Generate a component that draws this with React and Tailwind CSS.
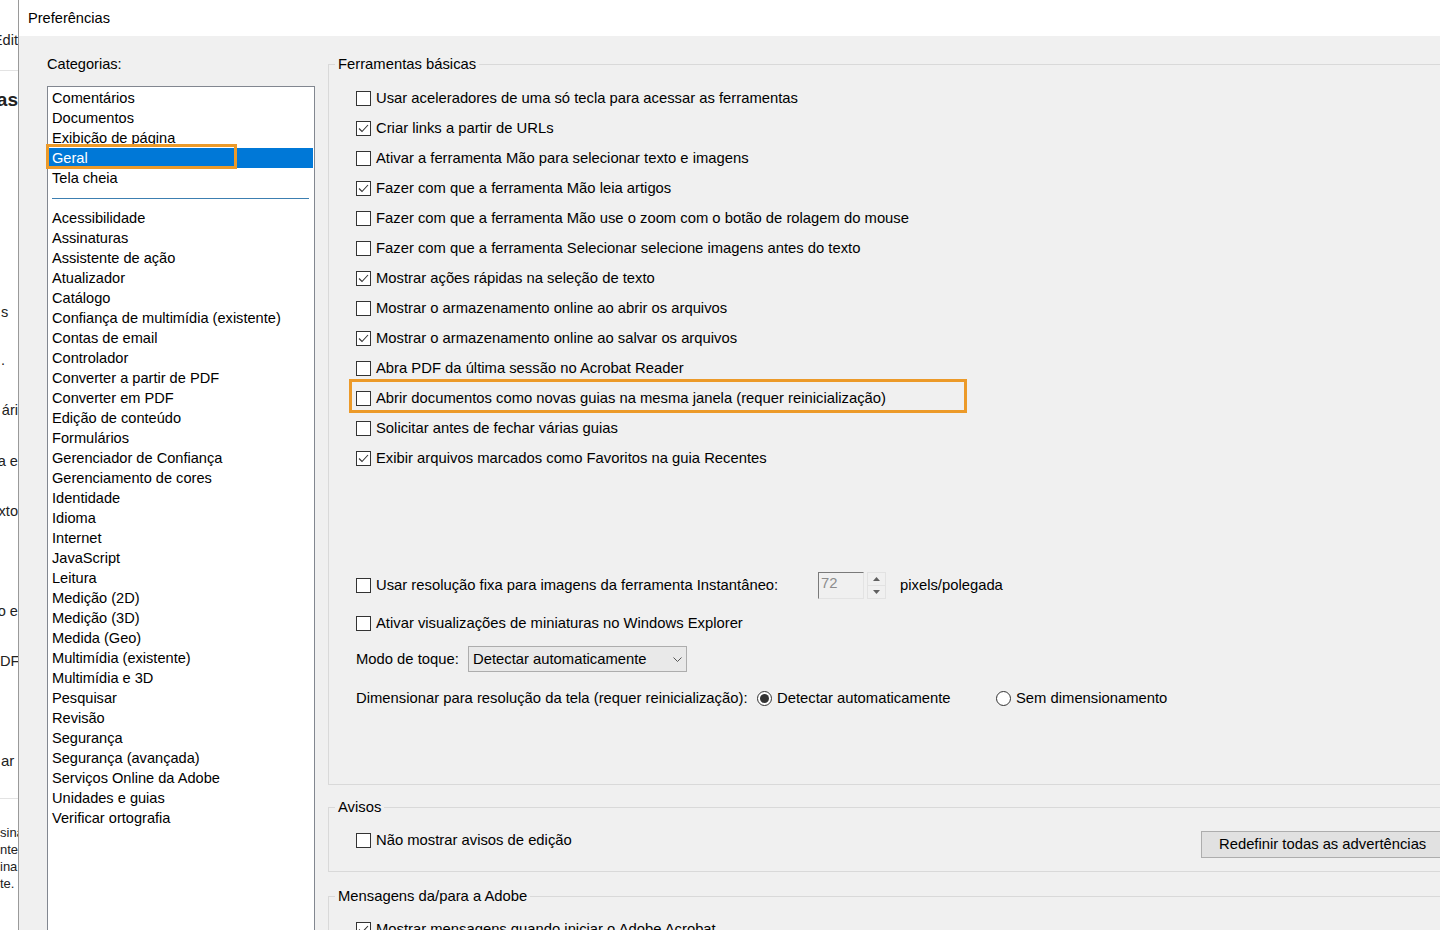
import React from "react";

const categoriasTopo = ["Comentários", "Documentos", "Exibição de página", "Geral", "Tela cheia"];

const categorias = [
  "Acessibilidade",
  "Assinaturas",
  "Assistente de ação",
  "Atualizador",
  "Catálogo",
  "Confiança de multimídia (existente)",
  "Contas de email",
  "Controlador",
  "Converter a partir de PDF",
  "Converter em PDF",
  "Edição de conteúdo",
  "Formulários",
  "Gerenciador de Confiança",
  "Gerenciamento de cores",
  "Identidade",
  "Idioma",
  "Internet",
  "JavaScript",
  "Leitura",
  "Medição (2D)",
  "Medição (3D)",
  "Medida (Geo)",
  "Multimídia (existente)",
  "Multimídia e 3D",
  "Pesquisar",
  "Revisão",
  "Segurança",
  "Segurança (avançada)",
  "Serviços Online da Adobe",
  "Unidades e guias",
  "Verificar ortografia",
];

const ferramentas = [
  { text: "Usar aceleradores de uma só tecla para acessar as ferramentas", checked: false },
  { text: "Criar links a partir de URLs", checked: true },
  { text: "Ativar a ferramenta Mão para selecionar texto e imagens", checked: false },
  { text: "Fazer com que a ferramenta Mão leia artigos", checked: true },
  { text: "Fazer com que a ferramenta Mão use o zoom com o botão de rolagem do mouse", checked: false },
  { text: "Fazer com que a ferramenta Selecionar selecione imagens antes do texto", checked: false },
  { text: "Mostrar ações rápidas na seleção de texto", checked: true },
  { text: "Mostrar o armazenamento online ao abrir os arquivos", checked: false },
  { text: "Mostrar o armazenamento online ao salvar os arquivos", checked: true },
  { text: "Abra PDF da última sessão no Acrobat Reader", checked: false },
  { text: "Abrir documentos como novas guias na mesma janela (requer reinicialização)", checked: false, marked: true },
  { text: "Solicitar antes de fechar várias guias", checked: false },
  { text: "Exibir arquivos marcados como Favoritos na guia Recentes", checked: true },
];

function CheckBox({ checked }) {
  return (
    <span className="flex h-[15px] w-[15px] shrink-0 items-center justify-center border border-[#333333] bg-white">
      {checked && (
        <svg width="13" height="13" viewBox="0 0 13 13">
          <path d="M2 6.5 L5 9.5 L11 3" fill="none" stroke="#333333" strokeWidth="1.1" />
        </svg>
      )}
    </span>
  );
}

function Radio({ checked }) {
  return (
    <span className="flex h-[15px] w-[15px] shrink-0 items-center justify-center rounded-full border border-[#333333] bg-white">
      {checked && <span className="h-[9px] w-[9px] rounded-full bg-[#333333]" />}
    </span>
  );
}

function CheckRow({ text, checked, marked }) {
  return (
    <div className="relative flex h-[30px] items-center pl-[27px]">
      <CheckBox checked={checked} />
      <span className="ml-[5px] whitespace-nowrap">{text}</span>
      {marked && (
        <span className="absolute left-[20px] top-[-4px] h-[34px] w-[618px] border-[3px] border-[#ec9a29]" />
      )}
    </div>
  );
}

function Grupo({ title, className, children }) {
  return (
    <fieldset className={"w-[1140px] border border-[#d9d9d9] " + className}>
      <legend className="ml-[6px] px-[3px] leading-[20px]">{title}</legend>
      {children}
    </fieldset>
  );
}

export default function App() {
  return (
    <div
      className="flex h-[930px] w-[1440px] overflow-hidden bg-white text-[14.6px] text-black"
      style={{ fontFamily: '"Liberation Sans", Arial, sans-serif' }}
    >
      {/* the editor window behind the dialog, only its right edge shows */}
      <div className="flex w-[18px] shrink-0 flex-col overflow-hidden text-[#222]">
        <div className="mt-[30px] flex h-[20px] justify-end whitespace-nowrap leading-[20px]">Edit</div>
        <div className="mt-[20px] h-px bg-[#e3e3e3]" />
        <div className="mt-[19px] flex h-[20px] justify-end whitespace-nowrap text-[19px] font-bold leading-[20px]">
          as
        </div>
        <div className="mt-[192px] flex h-[20px] whitespace-nowrap pl-px leading-[20px]">s</div>
        <div className="mt-[28px] flex h-[20px] whitespace-nowrap pl-px leading-[20px]">.</div>
        <div className="mt-[30px] flex h-[20px] justify-end whitespace-nowrap leading-[20px]">ári</div>
        <div className="mt-[31px] flex h-[20px] justify-end whitespace-nowrap leading-[20px]">a e</div>
        <div className="mt-[30px] flex h-[20px] justify-end whitespace-nowrap leading-[20px]">xto</div>
        <div className="mt-[80px] flex h-[20px] justify-end whitespace-nowrap leading-[20px]">o e</div>
        <div className="mt-[30px] flex h-[20px] whitespace-nowrap leading-[20px]">DF</div>
        <div className="mt-[80px] flex h-[20px] whitespace-nowrap pl-px text-[15px] leading-[20px]">ar</div>
        <div className="mt-[27px] h-px bg-[#e3e3e3]" />
        <div className="mt-[25px] flex flex-col whitespace-nowrap text-[13px] leading-[17px]">
          <span>sina</span>
          <span>nte</span>
          <span>ina</span>
          <span>te.</span>
        </div>
      </div>

      {/* Preferências dialog */}
      <div className="flex flex-1 flex-col border-l border-[#9a9a9a]">
        <div className="flex h-[36px] shrink-0 items-center bg-white pl-[9px] pt-px">Preferências</div>

        <div className="flex flex-1 bg-[#f0f0f0]">
          <div className="flex w-[296px] shrink-0 flex-col pl-[28px] pt-[18px]">
            <div className="leading-[20px]">Categorias:</div>
            <div className="relative mt-[12px] h-[900px] w-[268px] border border-[#828790] bg-white py-px">
              {categoriasTopo.map((c) => (
                <div
                  key={c}
                  className={
                    "mx-px h-[20px] whitespace-nowrap pl-[3px] leading-[20px] " +
                    (c === "Geral" ? "bg-[#0078d7] text-white" : "")
                  }
                >
                  {c}
                </div>
              ))}
              <div className="flex h-[20px] items-center pl-[4px] pr-[5px]">
                <div className="h-px w-full bg-[#3c7fb1]" />
              </div>
              {categorias.map((c) => (
                <div key={c} className="mx-px h-[20px] whitespace-nowrap pl-[3px] leading-[20px]">
                  {c}
                </div>
              ))}
              <span className="absolute left-[-2px] top-[57px] h-[25px] w-[191px] border-[3px] border-[#ec9a29]" />
            </div>
          </div>

          <div className="flex flex-col pl-[13px] pt-[18px] text-[14.8px]">
            <Grupo title="Ferramentas básicas" className="h-[731px] pt-[9px]">
              {ferramentas.map((f) => (
                <CheckRow key={f.text} {...f} />
              ))}

              <div className="mt-[97px] flex h-[30px] items-center pl-[27px]">
                <div className="flex w-[462px] items-center">
                  <CheckBox checked={false} />
                  <span className="ml-[5px] whitespace-nowrap">
                    Usar resolução fixa para imagens da ferramenta Instantâneo:
                  </span>
                </div>
                <div className="h-[27px] w-[46px] border-b border-l border-r border-t border-b-[#e3e3e3] border-l-[#7a7a7a] border-r-[#e3e3e3] border-t-[#7a7a7a] bg-[#f0f0f0] pl-[2px] leading-[20px] text-[#8c8c8c]">
                  72
                </div>
                <div className="ml-[3px] flex h-[27px] w-[19px] flex-col">
                  <div className="flex flex-1 items-center justify-center border border-[#e2e2e2]">
                    <svg width="7" height="4" viewBox="0 0 7 4">
                      <path d="M0 4 L3.5 0 L7 4 Z" fill="#606060" />
                    </svg>
                  </div>
                  <div className="flex flex-1 items-center justify-center border border-t-0 border-[#e2e2e2]">
                    <svg width="7" height="4" viewBox="0 0 7 4">
                      <path d="M0 0 L3.5 4 L7 0 Z" fill="#606060" />
                    </svg>
                  </div>
                </div>
                <span className="ml-[14px] whitespace-nowrap">pixels/polegada</span>
              </div>

              <div className="mt-[8px] flex h-[30px] items-center pl-[27px]">
                <CheckBox checked={false} />
                <span className="ml-[5px] whitespace-nowrap">
                  Ativar visualizações de miniaturas no Windows Explorer
                </span>
              </div>

              <div className="mt-[8px] flex h-[26px] items-center pl-[27px]">
                <span className="w-[112px] whitespace-nowrap">Modo de toque:</span>
                <div className="flex h-[26px] w-[219px] items-center justify-between border border-[#adadad] bg-[#e9e9e9] pl-[4px] pr-[4px]">
                  <span className="whitespace-nowrap">Detectar automaticamente</span>
                  <svg width="9" height="5" viewBox="0 0 9 5">
                    <path d="M0.5 0.5 L4.5 4.5 L8.5 0.5" fill="none" stroke="#555555" strokeWidth="1" />
                  </svg>
                </div>
              </div>

              <div className="mt-[16px] flex h-[20px] items-center pl-[27px]">
                <span className="w-[401px] whitespace-nowrap">
                  Dimensionar para resolução da tela (requer reinicialização):
                </span>
                <Radio checked />
                <span className="ml-[5px] w-[219px] whitespace-nowrap">Detectar automaticamente</span>
                <Radio checked={false} />
                <span className="ml-[5px] whitespace-nowrap">Sem dimensionamento</span>
              </div>
            </Grupo>

            <Grupo title="Avisos" className="mt-[12px] h-[75px] pt-[8px]">
              <div className="flex h-[30px] items-start pl-[27px]">
                <div className="flex h-[30px] w-[845px] items-center">
                  <CheckBox checked={false} />
                  <span className="ml-[5px] whitespace-nowrap">Não mostrar avisos de edição</span>
                </div>
                <button className="mt-[6px] h-[27px] w-[250px] whitespace-nowrap border border-[#adadad] bg-[#e1e1e1] pl-[17px] text-left leading-[25px]">
                  Redefinir todas as advertências
                </button>
              </div>
            </Grupo>

            <Grupo title="Mensagens da/para a Adobe" className="mt-[14px] h-[80px] pt-[8px]">
              <CheckRow text="Mostrar mensagens quando iniciar o Adobe Acrobat" checked />
            </Grupo>
          </div>
        </div>
      </div>
    </div>
  );
}
